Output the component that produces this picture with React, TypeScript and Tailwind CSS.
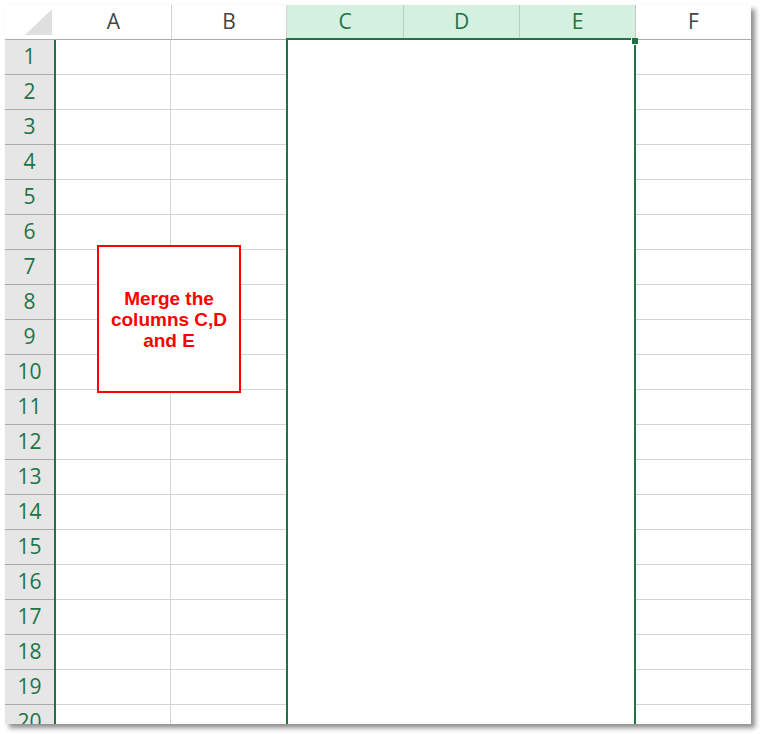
const ROWS = Array.from({ length: 20 }, (_, i) => i + 1);

const HEADERS = [
  { label: "A", w: "w-[116px]", on: false },
  { label: "B", w: "w-[115px]", on: false },
  { label: "C", w: "w-[117px]", on: true },
  { label: "D", w: "w-[116px]", on: true },
  { label: "E", w: "w-[116px]", on: true },
];

function GridColumn({ width, edge = true }: { width: string; edge?: boolean }) {
  return (
    <div className={`flex flex-col ${width} ${edge ? "border-r border-[#d4d4d4]" : ""}`}>
      {ROWS.map((r) => (
        <div key={r} className="h-[35px] shrink-0 border-b border-[#d4d4d4]" />
      ))}
    </div>
  );
}

export default function App() {
  return (
    <div className="relative h-[734px] w-[760px] bg-white pl-[5px] pt-[5px] font-['Open_Sans',sans-serif]">
      <div className="relative h-[719px] w-[746px] overflow-hidden bg-white shadow-[4px_4px_5px_rgba(0,0,0,0.45)]">
        {/* column headers */}
        <div className="flex h-[35px] border-b border-[#ababab] text-[21px]">
          <div className="relative w-[51px] shrink-0">
            <svg width="51" height="34" className="absolute left-0 top-0">
              <polygon points="47,4 47,30 20,30" fill="#dfdfdf" />
            </svg>
          </div>
          {HEADERS.map((h) => (
            <div
              key={h.label}
              className={`flex shrink-0 items-center justify-center border-r ${h.w} ${
                h.on ? "border-[#c6c6c6] bg-[#d3f0e0] text-[#217346]" : "border-[#d4d4d4] text-[#444444]"
              }`}
            >
              {h.label}
            </div>
          ))}
          <div className="flex flex-1 items-center justify-center text-[#444444]">F</div>
        </div>

        {/* body */}
        <div className="flex">
          <div className="flex w-[51px] shrink-0 flex-col border-r-2 border-[#1f7146] bg-[#e6e6e6]">
            {ROWS.map((r) => (
              <div
                key={r}
                className="flex h-[35px] shrink-0 items-center justify-center border-b border-[#ababab] text-[21px] text-[#217346]"
              >
                {r}
              </div>
            ))}
          </div>
          <GridColumn width="w-[115px]" />
          <GridColumn width="w-[115px]" edge={false} />
          <div className="w-[350px] shrink-0 bg-white" />
          <div className="flex-1">
            <GridColumn width="w-full" edge={false} />
          </div>
        </div>

        {/* selection outline C:E */}
        <div className="absolute left-[281px] top-[33px] h-[700px] w-[350px] border-2 border-[#1f7146]" />
        <div className="absolute left-[626px] top-[33px] h-[7px] w-[7px] border-b border-l border-white bg-[#1f7146]" />

        {/* callout */}
        <div className="absolute left-[92px] top-[240px] flex h-[148px] w-[144px] items-center justify-center border-2 border-[#ff0000] bg-white">
          <p className="text-center font-['Liberation_Sans',Arial,sans-serif] text-[19px] font-bold leading-[21px] text-[#ff0000]">
            Merge the
            <br />
            columns C,D
            <br />
            and E
          </p>
        </div>
      </div>
    </div>
  );
}
